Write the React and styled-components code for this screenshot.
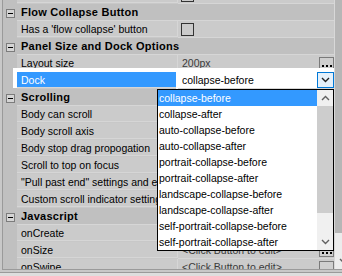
import React from 'react'
import styled, { createGlobalStyle } from 'styled-components'

const GlobalStyle = createGlobalStyle`
  html, body {
    margin: 0;
    padding: 0;
    background: #c8c8c8;
    overflow: hidden;
  }
  body {
    font-family: "Liberation Sans", Arial, sans-serif;
  }
`

const LINE = '#d6d6d6'
const GUTTER = '#c0c0c0'
const ROW_BG = '#cbcbcb'
const HIGHLIGHT = '#3399ff'

// values of the rows under the open list are left out: they cannot be seen
const ROWS = [
  { label: 'Has a close button', check: true },
  { category: true, label: 'Flow Collapse Button' },
  { label: "Has a 'flow collapse' button", check: true },
  { category: true, label: 'Panel Size and Dock Options' },
  { label: 'Layout size', value: '200px', button: 'ellipsis' },
  { label: 'Dock', value: 'collapse-before', button: 'drop', selected: true },
  { category: true, label: 'Scrolling' },
  { label: 'Body can scroll' },
  { label: 'Body scroll axis' },
  { label: 'Body stop drag propogation' },
  { label: 'Scroll to top on focus' },
  { label: '"Pull past end" settings and events' },
  { label: 'Custom scroll indicator settings' },
  { category: true, label: 'Javascript' },
  { label: 'onCreate', button: 'ellipsis' },
  { label: 'onSize', value: '<Click Button to edit>', button: 'ellipsis' },
  { label: 'onSwipe', value: '<Click Button to edit>', button: 'ellipsis' },
]

const DOCK_OPTIONS = [
  'collapse-before',
  'collapse-after',
  'auto-collapse-before',
  'auto-collapse-after',
  'portrait-collapse-before',
  'portrait-collapse-after',
  'landscape-collapse-before',
  'landscape-collapse-after',
  'self-portrait-collapse-before',
  'self-portrait-collapse-after',
]

const Page = styled.div`
  position: relative;
  width: 342px;
  height: 276px;
  overflow: hidden;
`

const Grid = styled.div`
  display: flex;
  margin-left: 2px;
  height: 269px;
  border-left: 1px solid #9a9a9a;
  border-bottom: 1px solid #9a9a9a;
  overflow: hidden;
`

const RowsPane = styled.div`
  flex: 0 0 331px;
  overflow: hidden;
`

const RowList = styled.div`
  display: flex;
  flex-direction: column;
  margin-top: -13px;
`

const Row = styled.div`
  display: flex;
  flex: none;
  height: 17px;
`

const Gutter = styled.div`
  flex: 0 0 14px;
  display: flex;
  justify-content: center;
  padding-top: 5px;
  box-sizing: border-box;
  background: ${GUTTER};
`

const MinusBox = styled.div`
  width: 9px;
  height: 9px;
  box-sizing: border-box;
  border: 1px solid #7c7c7c;
  background: #d4d4d4;
  display: flex;
  align-items: center;
  justify-content: center;

  &::after {
    content: '';
    width: 5px;
    height: 1px;
    background: #000;
  }
`

const CategoryTitle = styled.div`
  flex: 1;
  height: 16px;
  line-height: 16px;
  padding-left: 4px;
  border-bottom: 1px solid ${LINE};
  background: ${GUTTER};
  font-size: 11px;
  font-weight: bold;
  letter-spacing: 0.25px;
  color: #000;
  white-space: nowrap;
  overflow: hidden;
`

const Label = styled.div`
  flex: 0 0 161px;
  height: 16px;
  line-height: 16px;
  padding-left: 4px;
  box-sizing: border-box;
  border-bottom: 1px solid ${LINE};
  border-right: 1px solid ${LINE};
  background: ${p => (p.$selected ? HIGHLIGHT : ROW_BG)};
  color: ${p => (p.$selected ? '#fff' : '#000')};
  box-shadow: ${p => (p.$selected ? '-2px -2px 0 2px #fff' : 'none')};
  font-size: 10.5px;
  white-space: nowrap;
  overflow: hidden;
`

const Value = styled.div`
  flex: 1;
  display: flex;
  align-items: center;
  height: 16px;
  padding-left: 4px;
  border-bottom: 1px solid ${LINE};
  background: ${p => (p.$selected ? '#fff' : ROW_BG)};
  box-shadow: ${p => (p.$selected ? '0 -2px 0 2px #fff' : 'none')};
  font-size: 10.5px;
  color: ${p => (p.$selected ? '#000' : '#3a3a3a')};
  white-space: nowrap;
  overflow: hidden;
`

const ValueText = styled.span`
  flex: 1;
  overflow: hidden;
  line-height: 16px;
`

const Checkbox = styled.div`
  width: 13px;
  height: 13px;
  margin-left: -1px;
  box-sizing: border-box;
  border: 1px solid #333;
`

const EllipsisButton = styled.div`
  flex: none;
  width: 15px;
  height: 13px;
  box-sizing: border-box;
  border: 1px solid #7a7a7a;
  background: #cfcfcf;
  display: flex;
  align-items: flex-end;
  justify-content: center;
  gap: 2px;
  padding-bottom: 2px;
`

const Dot = styled.span`
  width: 2px;
  height: 2px;
  background: #000;
`

const DropButton = styled.div`
  flex: none;
  width: 17px;
  height: 16px;
  box-sizing: border-box;
  border: 1px solid #0078d7;
  background: #e5f1fb;
  display: flex;
  align-items: center;
  justify-content: center;
`

const VScroll = styled.div`
  flex: 0 0 17px;
  display: flex;
  flex-direction: column;
  border-left: 1px solid #d8d8d8;
  background: #ececec;
`

const Thumb = styled.div`
  height: ${p => p.$height}px;
  flex: none;
  background: ${p => p.$color};
`

const Track = styled.div`
  flex: 1;
`

const ArrowCell = styled.div`
  flex: none;
  height: ${p => p.$height || 16}px;
  display: flex;
  align-items: center;
  justify-content: center;
`

const Footer = styled.div`
  margin-top: 2px;
  height: 10px;
  border-top: 1px solid #9a9a9a;
  background: #dedede;
`

const DropList = styled.div`
  position: absolute;
  left: 157px;
  top: 89px;
  width: 177px;
  box-sizing: border-box;
  border: 1px solid #000;
  background: #fff;
  display: flex;
`

const Items = styled.div`
  flex: 1;
  display: flex;
  flex-direction: column;
`

const Item = styled.div`
  height: 16px;
  line-height: 16px;
  padding-left: 1px;
  font-size: 10.5px;
  white-space: nowrap;
  background: ${p => (p.$active ? HIGHLIGHT : '#fff')};
  color: ${p => (p.$active ? '#fff' : '#000')};
`

const ListScroll = styled.div`
  flex: 0 0 16px;
  display: flex;
  flex-direction: column;
  background: #f0f0f0;
`

const Chevron = ({ up, color = '#606060' }) => (
  <svg width="9" height="6" viewBox="0 0 9 6">
    <polyline
      points={up ? '1,5 4.5,1.5 8,5' : '1,1 4.5,4.5 8,1'}
      fill="none"
      stroke={color}
      strokeWidth="1.4"
    />
  </svg>
)

const PropertyRow = ({ row }) => (
  <Row>
    <Gutter />
    <Label $selected={row.selected}>{row.label}</Label>
    <Value $selected={row.selected}>
      {row.check && <Checkbox />}
      <ValueText>{row.value}</ValueText>
      {row.button === 'ellipsis' && (
        <EllipsisButton>
          <Dot />
          <Dot />
          <Dot />
        </EllipsisButton>
      )}
      {row.button === 'drop' && (
        <DropButton>
          <Chevron color="#222" />
        </DropButton>
      )}
    </Value>
  </Row>
)

const CategoryRow = ({ row }) => (
  <Row>
    <Gutter>
      <MinusBox />
    </Gutter>
    <CategoryTitle>{row.label}</CategoryTitle>
  </Row>
)

const App = () => (
  <Page>
    <GlobalStyle />
    <Grid>
      <RowsPane>
        <RowList>
          {ROWS.map(row =>
            row.category ? (
              <CategoryRow key={row.label} row={row} />
            ) : (
              <PropertyRow key={row.label} row={row} />
            )
          )}
        </RowList>
      </RowsPane>
      <VScroll>
        <Thumb $height={233} $color="#b6b6b6" />
        <Track />
        <ArrowCell $height={17}>
          <Chevron />
        </ArrowCell>
      </VScroll>
    </Grid>
    <Footer />

    <DropList>
      <Items>
        {DOCK_OPTIONS.map((opt, i) => (
          <Item key={opt} $active={i === 0}>
            {opt}
          </Item>
        ))}
      </Items>
      <ListScroll>
        <ArrowCell>
          <Chevron up />
        </ArrowCell>
        <Thumb $height={107} $color="#cdcdcd" />
        <Track />
        <ArrowCell>
          <Chevron />
        </ArrowCell>
      </ListScroll>
    </DropList>
  </Page>
)

export default App
